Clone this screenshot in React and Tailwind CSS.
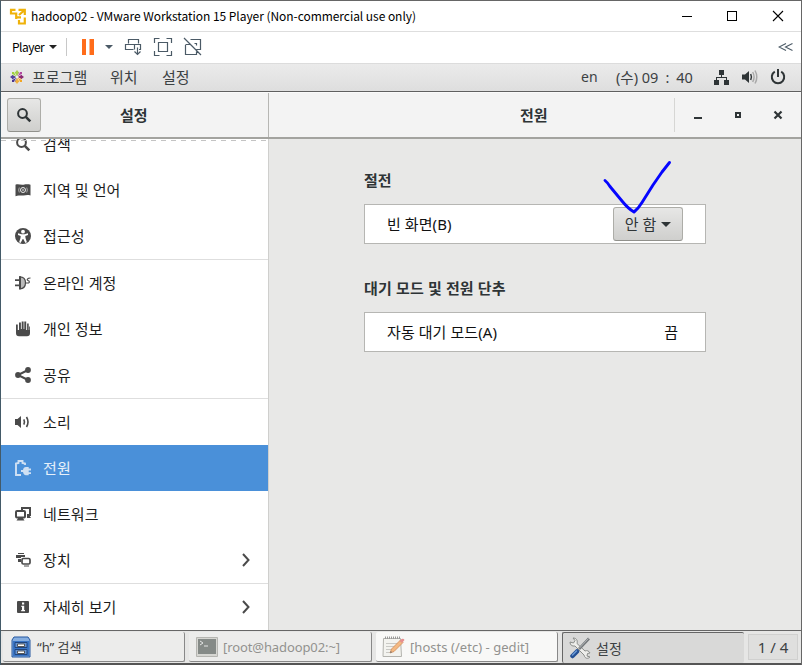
import React from "react";

const stroke = { fill: "none", stroke: "currentColor" };

function Icon({ children, className = "" }) {
  return (
    <svg width="16" height="16" viewBox="0 0 16 16" fill="currentColor" className={"shrink-0 " + className}>
      {children}
    </svg>
  );
}

function Magnifier({ className }) {
  return (
    <Icon className={className}>
      <circle cx="6.5" cy="6.5" r="4.4" {...stroke} strokeWidth="2" />
      <path d="M9.8 9.8 14.3 14.3" {...stroke} strokeWidth="2.6" />
    </Icon>
  );
}

const icons = {
  search: <Magnifier />,
  region: (
    <Icon>
      <path d="M.5 2.700c3-1.200 5 .6 8 0 2.500-.5 4.500-.7 7 0v10.800c-2.500-.8-4.500-.4-7 0-3 .5-5-.8-8 .7z" />
      <g fill="none" stroke="#fff" strokeWidth=".9">
        <circle cx="8" cy="8" r="2.500" />
        <path d="M4.300 5.500q-1.300 2.500 0 5M11.700 5.500q1.300 2.500 0 5" strokeOpacity=".6" />
      </g>
      <circle cx="8" cy="8" r=".8" fill="#fff" />
    </Icon>
  ),
  access: (
    <Icon>
      <circle cx="8" cy="8" r="8" />
      <circle cx="8" cy="3.700" r="1.900" fill="#fff" />
      <path d="M3 5.300 6.500 6.300h3L13 5.300v1.800l-2.700 1 .2 2 1.400 4.200-1.500.6L8.300 11h-.6L5.600 14.900l-1.500-.6 1.400-4.200.2-2-2.700-1z" fill="#fff" />
    </Icon>
  ),
  online: (
    <Icon>
      <path d="M0 4.300h4v1.700H0zM0 9.500h4v1.700H0z" />
      <path d="M4.800 1.800c4 0 5.700 2.800 5.700 6s-1.700 6-5.700 6z" fill="#bbb" stroke="currentColor" strokeWidth="1.200" />
      <path d="M4 1.200h2v13H4z" />
      <path d="M10.500 8h2.500c2 0 1.500-2.300 0-2.500-1.500-.5-.8-2.500 2.500-2.500" {...stroke} strokeWidth="1.200" />
    </Icon>
  ),
  hand: (
    <Icon>
      <path d="M1 3.500h1.800V9H4V1.500h1.900V8h.8V.5h1.900V8h.7V.5h1.900V9h.9V2.500h1.600V9h.5V5.500H15V12q0 3.200-3 3.200H4q-3 0-3-3.200z" />
    </Icon>
  ),
  share: (
    <Icon>
      <path d="M13 3 3 8l10 5" {...stroke} strokeWidth="2" />
      <circle cx="13" cy="3" r="2.900" />
      <circle cx="3" cy="8" r="2.900" />
      <circle cx="13" cy="13" r="2.900" />
    </Icon>
  ),
  sound: (
    <Icon>
      <path d="M0 5h2.500L6 2v12l-3.500-3H0z" />
      <path d="M8.800 5.300q1.400 2.700 0 5.400M11.500 3q3 5 0 10" {...stroke} strokeWidth="1.600" />
    </Icon>
  ),
  power: (
    <Icon className="text-[#cfe0f3]">
      <path d="M6 15H1V3.500L3.500 3V1h4v2L10 3.500V5" {...stroke} strokeWidth="1.900" />
      <path d="M16 8.600h-2.300V7H11c-1.700 0-2.700 1-3 3H6v2h2c.3 2 1.300 3.200 3 3.200h2.700V14H16v-1.800h-2.300v-1.800H16z" />
    </Icon>
  ),
  network: (
    <Icon>
      <path d="M7 4V2h8v7h-3" {...stroke} strokeWidth="2" />
      <rect x="1" y="5" width="9" height="6.500" rx="1" {...stroke} strokeWidth="2" />
      <path d="M3.500 11.500h4l2 3h-8zM12 9h2l2 3h-4z" />
    </Icon>
  ),
  devices: (
    <Icon>
      <path d="M3 1h6v1H3zM1 3h9v2H6v1H1zM3 7h3v3H3z" />
      <rect x="7" y="6.500" width="8" height="5.500" rx="1.300" {...stroke} strokeWidth="1.700" />
      <path d="M9 13.500h5v1H9z" />
    </Icon>
  ),
  info: (
    <Icon>
      <rect x="2" y="2" width="12" height="12" rx="1" />
      <path d="M7 3.500h2.200v2H7zM6.300 6.700h2.900V11h.8v1.200H6.200V11H7V8h-.7z" fill="#fff" />
    </Icon>
  ),
};

const items = [
  { icon: "search", label: "검색" },
  { icon: "region", label: "지역 및 언어" },
  { icon: "access", label: "접근성", line: true },
  { icon: "online", label: "온라인 계정" },
  { icon: "hand", label: "개인 정보" },
  { icon: "share", label: "공유", line: true },
  { icon: "sound", label: "소리" },
  { icon: "power", label: "전원", active: true },
  { icon: "network", label: "네트워크" },
  { icon: "devices", label: "장치", more: true, line: true },
  { icon: "info", label: "자세히 보기", more: true },
];

function TitleBar() {
  return (
    <div className="flex h-[31px] items-center border-b border-[#dedede] bg-white pl-2 text-black">
      <svg width="17" height="17" viewBox="0 0 17 17" className="shrink-0 fill-none stroke-[#efb20a]" strokeWidth="2.200">
        <path d="M2 6.500V1.800H6.500M9.500 1.800H15.800V7M1.500 5.500H7.200V11M15 2.500 10 7M7.500 9.300H12M15.800 9.500v6H10V12" />
      </svg>
      <span className="ml-[5px] whitespace-nowrap font-['Noto_Sans_CJK_KR',sans-serif] text-[12px] leading-[28px] tracking-[-0.05px]">
        hadoop02 - VMware Workstation 15 Player (Non-commercial use only)
      </span>
      <svg width="104" height="12" viewBox="0 0 104 12" className="ml-auto mr-[15px] fill-none stroke-black" shapeRendering="crispEdges">
        <path d="M0 6.500h10M45.500 1.500h9v9h-9z" />
        <path d="m91 1 10 10M101 1l-10 10" shapeRendering="auto" strokeWidth="1.100" />
      </svg>
    </div>
  );
}

function ToolBar() {
  return (
    <div className="flex h-8 items-center border-b border-[#dcdcdc] bg-white pb-[2px] pl-[11px] text-black">
      <span className="w-[34px] font-['Noto_Sans_CJK_KR',sans-serif] text-[12px] leading-[30px] tracking-[-0.5px]">Player</span>
      <svg width="156" height="20" viewBox="0 0 156 20" className="ml-px fill-none stroke-[#4b5a66]">
        <path d="M2 8h8l-4 4z" fill="#222" stroke="none" />
        <path d="M19.500 1v18" stroke="#c8c8c8" />
        <path d="M35 2h4v16h-4zM42.500 2h4.500v16h-4.500z" fill="#ff6c1a" stroke="none" />
        <path d="M58 8h8l-4 4z" fill="#4b5a66" stroke="none" />
        <g transform="translate(1 0)" strokeWidth="1.200">
          <path d="M80.500 6.500v-4h10v4M91 12.500h1.500v-5h-6v5M85.500 12.500h-8v-5h9M89.500 10.500v7M86.500 14.500l3 3 3-3" />
          <path d="M106.500 6V1.500h5M118.500 1.500h5V6M123.500 14v4.500h-5M111.500 18.500h-5V14M110.500 5.500h9v9h-9z" />
          <path d="M142.500 2.500h10v10h-4M146.500 6.500h2v2M137.500 8v9.500h11v-3M143 7.500h-5.500M136 1l17 17" />
        </g>
      </svg>
      <svg width="15" height="8" viewBox="0 0 15 8" className="ml-auto mr-[8px] fill-none stroke-[#4b5a66]">
        <path d="M8 .5 1 4l7 3.500M14.500.5l-7 3.500 7 3.500" strokeWidth="1.100" />
      </svg>
    </div>
  );
}

function CentosLogo() {
  return (
    <svg width="14" height="14" viewBox="0 0 14 14" className="ml-[9px] mr-[8px]">
      <path d="M2 2h4.500v4.500H2z" fill="#9fd13e" />
      <path d="M7.500 2H12v4.500H7.500z" fill="#b0469f" />
      <path d="M2 7.500h4.500V12H2z" fill="#4a3590" />
      <path d="M7.500 7.500H12V12H7.500z" fill="#f2a624" />
      <path d="M7 0 9 2.600 7 6 5 2.600z" fill="#a8d04d" />
      <path d="M14 7l-2.600 2L8 7l3.400-2z" fill="#8a2a72" />
      <path d="m7 14-2-2.600L7 8l2 3.400z" fill="#f0b040" />
      <path d="m0 7 2.600-2L6 7 2.600 9z" fill="#54409b" />
      <path d="m4 1.500 2 4M10 1.500l-2 4M4 12.500l2-4M10 12.500l-2-4M1.500 4l4 2M12.500 4l-4 2M1.500 10l4-2M12.500 10l-4-2" stroke="#eee" strokeWidth=".7" />
      <circle cx="7" cy="7" r="1.300" fill="#eee" />
    </svg>
  );
}

function TopPanel() {
  return (
    <div className="flex h-[28px] items-center border-b border-[#5f5f5f] bg-linear-to-b from-[#ebebeb] to-[#dedede] pb-px text-[15px] leading-[26px] text-[#3c4143]">
      <CentosLogo />
      <span className="w-[78px]">프로그램</span>
      <span className="w-[52px]">위치</span>
      <span>설정</span>
      <span className="ml-auto w-[35px] text-[14px]">en</span>
      <span className="w-[98px] whitespace-pre text-[14.500px]">(수) 09<span className="mx-[7px]">:</span>40</span>
      <svg width="72" height="16" viewBox="0 0 72 16" className="mr-[15px] fill-[#2e3436]">
        <path d="M5 1h5v5H5zM0 11h5v5H0zM10 11h5v5h-5zM7 6h1v2h5v3h-1V9H3v2H2V8h5z" />
        <path d="M28 5.500h3L35 2v12l-4-3.500h-3z" />
        <path d="M36.700 5q1.500 3 0 6" fill="none" stroke="#2e3436" strokeWidth="1.500" />
        <path d="M38.700 3q2.800 5 0 10M41 1.500q3.600 6.500 0 13" fill="none" stroke="#aaa" strokeWidth="1.500" />
        <path d="M60.800 2.700a6.200 6.200 0 1 0 6.400 0" fill="none" stroke="#2e3436" strokeWidth="2" />
        <path d="M63 0h2v8h-2z" />
      </svg>
    </div>
  );
}

function HeaderBar() {
  return (
    <div className="flex h-[47px] border-b-2 border-b-[#a3a39f] border-t border-t-[#fafafa] bg-[#f3f3f3] text-[15px] font-bold text-[#2e3436]">
      <div className="flex w-[268px] items-center border-r border-[#b6b6b3] pl-[6px]">
        <div className="flex h-[34px] w-[34px] items-center justify-center rounded-[3px] border border-[#adada8] border-b-[#91918c] bg-linear-to-b from-[#e7e7e6] to-[#cfcfcd]">
          <Magnifier />
        </div>
        <span className="ml-[79px]">설정</span>
      </div>
      <div className="flex flex-1 items-center">
        <span className="ml-[251px]">전원</span>
        <div className="ml-auto flex h-[34px] items-center border-l border-[#d6d6d4]">
          <svg width="126" height="16" viewBox="0 0 126 16" className="fill-[#2e3436]">
            <path d="M19 10h8v2h-8z" />
            <path d="M61 6h4v4h-4z" fill="none" stroke="#2e3436" strokeWidth="2" />
            <path d="m99.500 4.500 7 7M106.500 4.500l-7 7" fill="none" stroke="#2e3436" strokeWidth="2.200" />
          </svg>
        </div>
      </div>
    </div>
  );
}

function Row({ icon, label, active, more, line }) {
  return (
    <>
      <div className={"flex h-[46px] shrink-0 items-center pl-[14px] " + (active ? "bg-[#4a90d9] text-[#e6f0fa]" : "text-[#4a4a4a]")}>
        {icons[icon]}
        <span className={"ml-[12px] text-[15px] tracking-[0.1px] " + (active ? "text-[#e6f0fa]" : "text-[#1c1c1c]")}>{label}</span>
        {more && (
          <svg width="8" height="14" viewBox="0 0 8 14" className="ml-auto mr-[18px]">
            <path d="m1 1 5.500 6L1 13" {...stroke} strokeWidth="2" />
          </svg>
        )}
      </div>
      {line && <div className="h-px shrink-0 bg-[#dedede]" />}
    </>
  );
}

function Setting({ label, children }) {
  return (
    <div className="flex h-[40px] w-[342px] items-center justify-between border border-[#b6b6b3] bg-white pl-[22px] pr-[22px] text-[15px] text-[#111]">
      <span className="tracking-[0.08px]">{label}</span>
      {children}
    </div>
  );
}

function PowerPane() {
  return (
    <div className="flex-1 bg-[#e8e8e7] pl-[95px] pt-[30px]">
      <h2 className="h-[35px] text-[15px] font-bold leading-[22px] text-[#2e3436]">절전</h2>
      <div className="relative">
        <Setting label="빈 화면(B)">
          <div className="flex h-[34px] w-[70px] items-center justify-center gap-[5px] rounded-[3px] border border-[#adada8] border-b-[#91918c] bg-linear-to-b from-[#e7e7e6] to-[#cfcfcd] text-[#2e3436]">
            <span>안 함</span>
            <svg width="10" height="5" viewBox="0 0 10 5" fill="currentColor"><path d="M0 0h10L5 5z" /></svg>
          </div>
        </Setting>
        <svg width="70" height="56" viewBox="0 0 70 56" className="absolute -top-[44px] left-[238px] fill-none stroke-[#0505ff]" strokeWidth="2.900" strokeLinecap="round" strokeLinejoin="round">
          <path d="M3 20.500Q6 23 8 26.500L20 41q6 7.500 12 11 4-3 8-9.500L51 25 60 12 67.500 2.500" />
        </svg>
      </div>
      <h2 className="mt-[33px] h-[35px] text-[15px] font-bold leading-[22px] tracking-[0.15px] text-[#2e3436]">대기 모드 및 전원 단추</h2>
      <Setting label="자동 대기 모드(A)">
        <span className="mr-[5px]">끔</span>
      </Setting>
    </div>
  );
}

function Cabinet() {
  return (
    <svg width="20" height="22" viewBox="0 0 20 22">
      <path d="M3 1h14l2 3v17H1V4z" fill="#86aee0" stroke="#24579f" />
      <path d="M2 5h16v15H2z" fill="#3975c6" />
      <path d="M4 6.500h12v5H4zM4 13.500h12v5H4z" fill="#6594d4" stroke="#20457d" />
      <path d="M6.500 8h7v2.500h-7zM6.500 15h7v2.500h-7z" fill="#fff" stroke="#555" />
    </svg>
  );
}

function Terminal() {
  return (
    <svg width="22" height="20" viewBox="0 0 22 20">
      <path d="M.5.500h21v19H.5z" fill="#d6d6d2" stroke="#b5b5b1" />
      <path d="M2 2h18v15H2z" fill="#858a87" />
      <path d="m4 4 3 2-3 2M8 9h4" fill="none" stroke="#e5e5e5" />
    </svg>
  );
}

function Notepad() {
  return (
    <svg width="23" height="22" viewBox="0 0 23 22">
      <path d="M1.500 2.500h17l1 18H1z" fill="#f3f3ef" stroke="#b3b3ae" />
      <path d="M3 1.800h15" stroke="#999" strokeWidth="2.500" strokeDasharray="1 1" />
      <path d="M4 7.500h12M4 10.500h9M4 13.500h8M4 16.500h4" stroke="#c9c9c5" />
      <path d="m8 17 1.500-4L18.500 4l2.500 2.500-9 9z" fill="#f3b982" stroke="#d18c58" strokeWidth=".8" />
      <path d="m17.500 5 2-2q2-1 3 1l-2.500 3z" fill="#e58f8f" />
      <path d="m8 17 .8-2 1.400 1.200z" fill="#777" />
    </svg>
  );
}

function Tools() {
  return (
    <svg width="22" height="22" viewBox="0 0 22 22">
      <path d="M1 5c0 3 2 4.500 5 4l9 9c1 4 4 4 6 2l-3-1 .5-2.500 2.500-.5c-1-2-3-3-5-2L8 6.500C9 3 7 1 4 1l2 2.500L4.500 6z" fill="#eeeeeb" stroke="#8a8d8a" />
      <path d="M20 1.500 10 12" stroke="#73777a" strokeWidth="2.600" />
      <path d="M19.500 1.500 10 11.500" stroke="#c3c5c6" strokeWidth=".8" />
      <path d="m8 14.500-4.500 4.500" stroke="#234f94" strokeWidth="4.500" strokeLinecap="round" />
      <path d="M7.500 14 3.500 18" stroke="#6b9ad5" strokeWidth="1.500" strokeLinecap="round" />
    </svg>
  );
}

function TaskBar() {
  return (
    <div className="flex h-[35px] shrink-0 border-b-2 border-t border-b-[#555] border-t-[#666] bg-[#e6e6e5] text-[14px] text-[#3c4143]">
      <div className="my-px ml-[2px] flex w-[182px] items-center rounded-[2px] border-b border-r border-[#888] bg-[#ececeb] pl-[8px] pt-px">
        <Cabinet />
        <span className="ml-[6px] pt-px text-[13px]">“h” 검색</span>
      </div>
      <div className="my-px ml-[4px] flex w-[183px] items-center rounded-[2px] border-b border-r border-[#888] bg-[#ececeb] pl-[7px] text-[#92928f]">
        <Terminal />
        <span className="ml-[5px] whitespace-nowrap pt-[3px] text-[13px] tracking-[-0.1px]">[root@hadoop02:~]</span>
      </div>
      <div className="my-px ml-[4px] flex w-[182px] items-center rounded-[2px] border-b border-r border-[#888] bg-[#f8f8f7] pl-[6px] text-[#92928f]">
        <Notepad />
        <span className="ml-[5px] whitespace-nowrap pt-[3px] text-[13px] tracking-[0.04px]">[hosts (/etc) - gedit]</span>
      </div>
      <div className="mt-px ml-[4px] flex w-[182px] items-center rounded-[2px] border-l border-t border-[#666] bg-[#d9d9d8] pl-[6px]">
        <Tools />
        <span className="ml-[5px]">설정</span>
      </div>
      <div className="my-[3px] ml-[4px] flex w-[50px] items-center justify-center border border-[#d0d0cf] bg-[#dfdfde] text-[15px]">1 / 4</div>
    </div>
  );
}

export default function App() {
  return (
    <div className="flex h-[665px] w-[802px] flex-col overflow-hidden border border-b-0 border-[#666] border-l-[#435a68] bg-[#e8e8e7] font-['Noto_Sans','Noto_Sans_CJK_KR',sans-serif]">
      <TitleBar />
      <ToolBar />
      <TopPanel />
      <HeaderBar />
      <div className="flex h-[491px] shrink-0">
        <div className="relative flex w-[268px] shrink-0 flex-col overflow-hidden border-r border-[#cfcfcd] bg-white">
          <div className="-mt-[18px] flex flex-col">
            {items.map((item) => (
              <Row key={item.label} {...item} />
            ))}
          </div>
          <svg width="267" height="1" className="absolute left-0 top-px"><path d="M0 .5h267" stroke="#c4c4c4" strokeDasharray="5 5" /></svg>
        </div>
        <PowerPane />
      </div>
      <TaskBar />
    </div>
  );
}
